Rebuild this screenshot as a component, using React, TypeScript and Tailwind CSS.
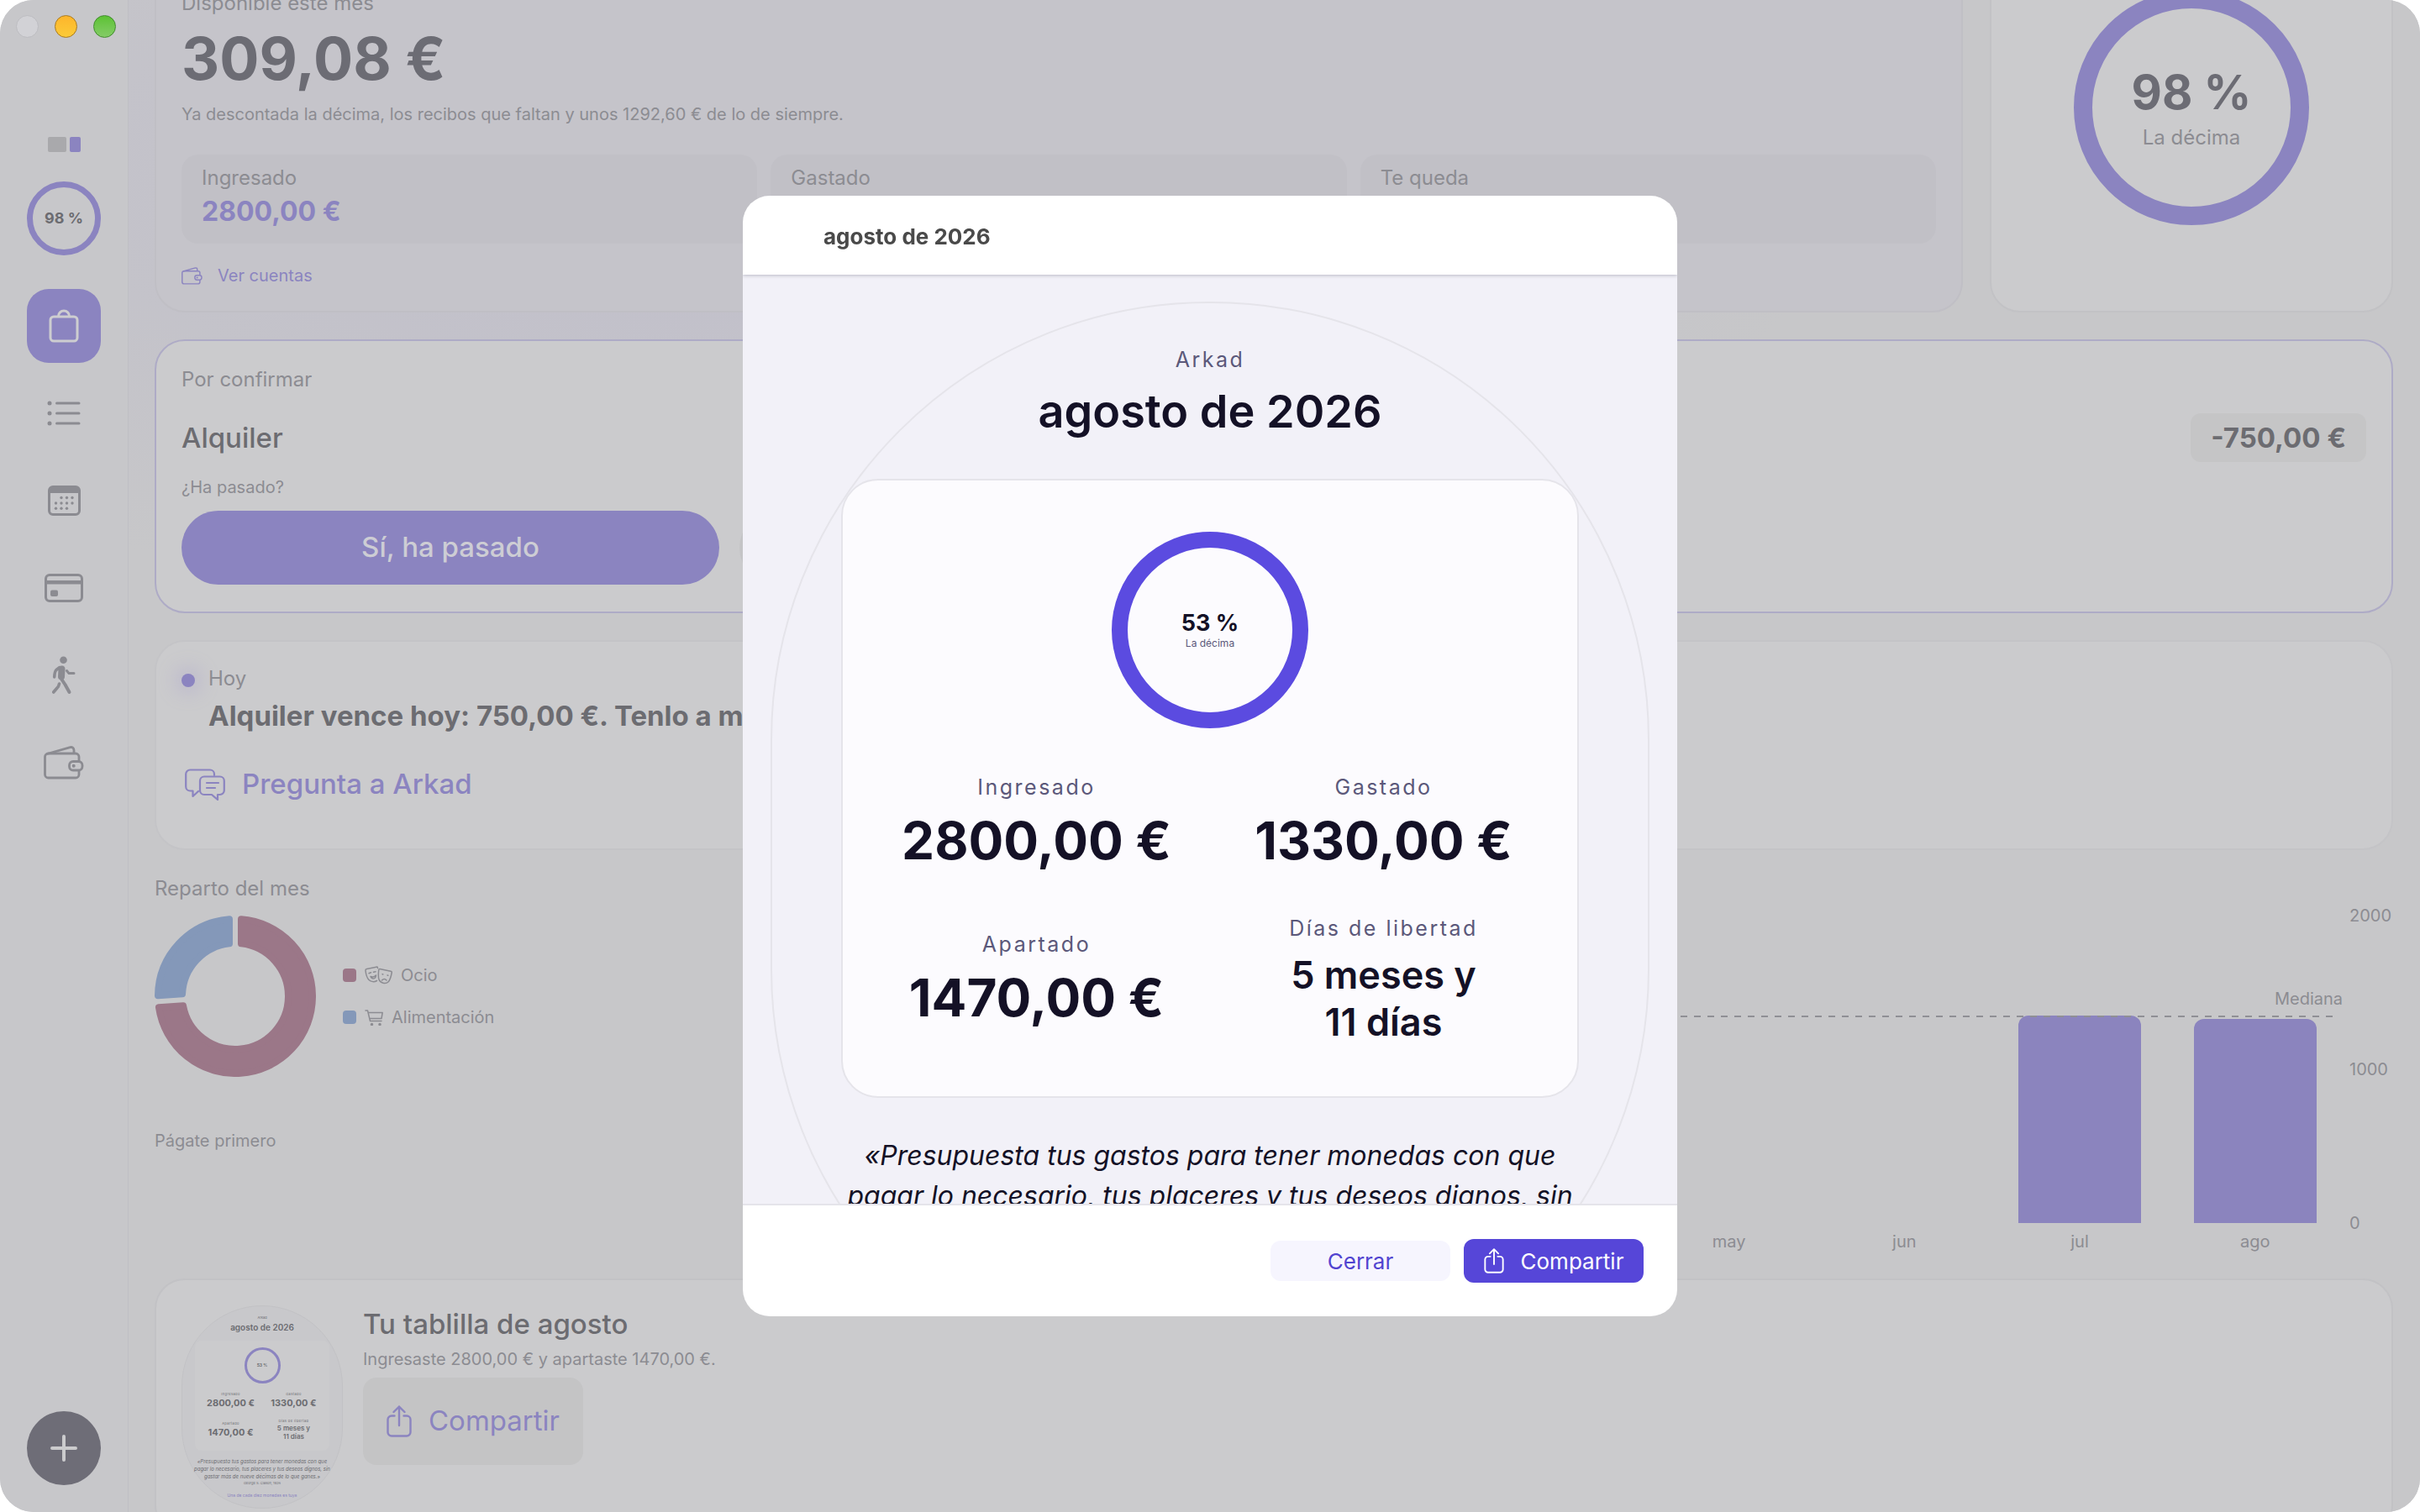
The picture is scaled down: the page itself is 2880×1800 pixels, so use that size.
import type { ReactNode } from "react";

const CalendarIcon = () => (
  <svg width="39" height="36" viewBox="0 0 39 36" fill="none">
    <rect x="1.5" y="1.5" width="36" height="33" rx="4.5" stroke="currentColor" strokeWidth="3" />
    <path d="M1.5 9V6a4.5 4.5 0 0 1 4.5-4.5h27a4.5 4.5 0 0 1 4.5 4.5v3z" fill="currentColor" />
    <g fill="currentColor">
      {[[16, 14.5], [22.5, 14.5], [29, 14.5], [9.5, 21], [16, 21], [22.5, 21], [29, 21], [9.5, 27.2], [16, 27.2], [22.5, 27.2]].map(([x, y]) => (
        <circle key={`${x}-${y}`} cx={x} cy={y} r="1.7" />
      ))}
    </g>
  </svg>
);

const BagIcon = () => (
  <svg width="36" height="40" viewBox="0 0 36 40" fill="none" stroke="currentColor" strokeWidth="3">
    <rect x="2" y="9" width="32" height="29" rx="4" />
    <path d="M11.5 8.5a6.5 6.5 0 0 1 13 0" />
  </svg>
);

const ListIcon = () => (
  <svg width="40" height="30" viewBox="0 0 40 30" stroke="currentColor" strokeWidth="3" strokeLinecap="round">
    <path d="M11.5 3H38M11.5 15H38M11.5 27H38" />
    <g fill="currentColor" stroke="none">
      <circle cx="3" cy="3" r="2.5" />
      <circle cx="3" cy="15" r="2.5" />
      <circle cx="3" cy="27" r="2.5" />
    </g>
  </svg>
);

const CardIcon = () => (
  <svg width="46" height="34" viewBox="0 0 46 34" fill="none">
    <rect x="1.5" y="1.5" width="43" height="31" rx="4.5" stroke="currentColor" strokeWidth="3" />
    <path d="M1.5 10.2h43" stroke="currentColor" strokeWidth="4.5" />
    <rect x="7" y="19.5" width="9" height="7.5" rx="2" fill="currentColor" />
  </svg>
);

const WalkIcon = () => (
  <svg width="29" height="46" viewBox="0 0 29 46" fill="none" stroke="currentColor" strokeLinecap="round" strokeLinejoin="round">
    <circle cx="13.5" cy="4.7" r="4.3" fill="currentColor" stroke="none" />
    <path d="M11.5 15.5 11 24.5" strokeWidth="8" />
    <path d="M9 13.5 5 16.5Q3 18.5 2.7 25" strokeWidth="3.5" />
    <path d="m17.5 17.5 2.5 3.1h6" strokeWidth="3" />
    <path d="m10.5 26.5 5 7.5 5 9" strokeWidth="4" />
    <path d="M8.5 33Q8 36 6 38l-4.3 5" strokeWidth="3.6" />
  </svg>
);

const WalletIcon = ({ width = 48, height = 40 }: { width?: number; height?: number }) => (
  <svg width={width} height={height} viewBox="0 0 48 40" fill="none" stroke="currentColor" strokeWidth="2.8">
    <path d="M42 18.5V13a4 4 0 0 0-4-4H5.5a4 4 0 0 0-4 4v21a4 4 0 0 0 4 4H38a4 4 0 0 0 4-4v-5" />
    <path d="M4 9.5 31.5 1.6Q35.5 1 36 5v4" />
    <rect x="30.5" y="18.5" width="15.5" height="10.5" rx="4.5" />
    <circle cx="35.7" cy="23.7" r="2" fill="currentColor" stroke="none" />
  </svg>
);

const ShareIcon = ({ width = 30, height = 38 }: { width?: number; height?: number }) => (
  <svg width={width} height={height} viewBox="0 0 30 38" fill="none" stroke="currentColor" strokeWidth="2.4" strokeLinecap="round" strokeLinejoin="round">
    <path d="M9.5 12.5H6A4.5 4.5 0 0 0 1.5 17v15A4.5 4.5 0 0 0 6 36.5h18a4.5 4.5 0 0 0 4.5-4.5V17a4.5 4.5 0 0 0-4.5-4.5h-3.5" />
    <path d="M15 24V1.5M8.5 8 15 1.5 21.5 8" />
  </svg>
);

const ChatIcon = () => (
  <svg width="48" height="38" viewBox="0 0 48 38" fill="none" stroke="currentColor" strokeWidth="2.2" strokeLinecap="round" strokeLinejoin="round">
    <path d="M35 8V6.5a5 5 0 0 0-5-5H6.2a5 5 0 0 0-5 5v15a5 5 0 0 0 5 5h3.3V33l6.5-6" />
    <path d="M23 9.5h18.8a5 5 0 0 1 5 5V26a5 5 0 0 1-5 5H39v6l-7-6h-9a5 5 0 0 1-5-5V14.5a5 5 0 0 1 5-5z" />
    <path d="M26 17h14M26 23h10" />
  </svg>
);

const MasksIcon = () => (
  <svg width="33" height="22" viewBox="0 0 33 22" fill="none" stroke="currentColor" strokeWidth="1.5" strokeLinecap="round" strokeLinejoin="round">
    <path d="M15.5 2.5 15 1 2.5 3.6Q.8 4 1 5.5C1.5 10 2.5 14 5 16.5c2.5 2.5 6.5 2.8 9.5 1" />
    <path d="M18 3.5 31 6.2q1.5.3 1.2 1.8C31.5 12 30.5 16.5 28 19c-3 3-9.5 1.5-11-3-1.3-3.8-.5-8-.3-11.2Q16.9 3.3 18 3.5z" />
    <path d="m5 8.8 2.5-1M10.5 7.3l2.5-.6M7 12.5q4 1.5 6.5-1.5-.5 4-3 4T7 12.5zM20.5 17q3-3 5.500 0M21 9.7l.8.2M27 11l.8.2" />
  </svg>
);

const CartIcon = () => (
  <svg width="22" height="19" viewBox="0 0 22 19" fill="none" stroke="currentColor" strokeWidth="1.5" strokeLinecap="round" strokeLinejoin="round">
    <path d="M1 1h2.500L6.500 13.500H20M4.200 3.500h17L20 10.500H6" />
    <circle cx="8.5" cy="17.5" r="1" fill="currentColor" />
    <circle cx="18" cy="17.5" r="1" fill="currentColor" />
  </svg>
);

const navItems = [
  { label: "Resumen", icon: <BagIcon />, active: true },
  { label: "Movimientos", icon: <ListIcon /> },
  { label: "Calendario", icon: <CalendarIcon /> },
  { label: "Tarjetas", icon: <CardIcon /> },
  { label: "Camino", icon: <WalkIcon /> },
  { label: "Cuentas", icon: <WalletIcon /> },
];

const months = [
  { name: "mar", value: 0 },
  { name: "abr", value: 0 },
  { name: "may", value: 0 },
  { name: "jun", value: 0 },
  { name: "jul", value: 1349 },
  { name: "ago", value: 1328 },
];

const Sidebar = () => (
  <aside className="flex w-[153px] shrink-0 flex-col items-center border-r border-[#bfbfc4] bg-[#c7c7ca] pt-[18px] pb-8">
    <div className="ml-1 flex gap-[19px]">
      <span className="size-[27px] rounded-full border border-[#bcbcc0] bg-[#d2d2d6]" />
      <span className="size-[27px] rounded-full border border-[#a8781c] bg-linear-to-b from-[#fdb52c] to-[#fbcb38]" />
      <span className="size-[27px] rounded-full border border-[#3f8a2c] bg-linear-to-b from-[#5cc232] to-[#84cc66]" />
    </div>
    <div className="mt-[118px] flex gap-1">
      <span className="h-[18px] w-[22px] rounded-xs bg-[#a9a9ac]" />
      <span className="h-[18px] w-[13px] rounded-xs bg-[#8b84c0]" />
    </div>
    <div className="mt-[35px] flex size-22 items-center justify-center rounded-full border-[7px] border-[#8b84c0] text-lg font-bold text-[#6c6c71]">
      98 %
    </div>
    <nav className="mt-10 flex flex-col gap-4">
      {navItems.map((item) => (
        <button
          key={item.label}
          aria-label={item.label}
          className={
            item.active
              ? "flex size-22 items-center justify-center rounded-[26px] bg-[#8b84c0] text-[#cdcdd0]"
              : "flex size-22 items-center justify-center rounded-[26px] text-[#8b8b91]"
          }
        >
          {item.icon}
        </button>
      ))}
    </nav>
    <button aria-label="Añadir" className="mt-auto flex size-22 items-center justify-center rounded-full bg-[#6e6d77] text-[#cbcbcd]">
      <svg width="32" height="32" viewBox="0 0 32 32" stroke="currentColor" strokeWidth="4" strokeLinecap="round">
        <path d="M16 2v28M2 16h28" />
      </svg>
    </button>
  </aside>
);

const Tile = ({ label, value }: { label: string; value?: string }) => (
  <div className="flex h-[106px] flex-1 flex-col gap-[6px] rounded-[20px] bg-[#c1c0c6] px-6 pt-[14px]">
    <div className="text-2xl leading-7 text-[#8c8c92]">{label}</div>
    {value && <div className="text-[32px] leading-10 font-bold text-[#8b84c0]">{value}</div>}
  </div>
);

const Hero = () => (
  <div className="flex min-h-[488px] gap-8">
    <section className="flex flex-1 flex-col justify-end rounded-[36px] border-2 border-[#c0bfc5] bg-[#c5c4ca] px-[30px] pt-[30px] pb-7">
      <div className="text-2xl leading-7 text-[#8c8c92]">Disponible este mes</div>
      <div className="mt-3 text-[70px] leading-20 font-bold text-[#6c6c74]">309,08 €</div>
      <p className="mt-3 text-xl leading-7 text-[#8c8c92]">
        Ya descontada la décima, los recibos que faltan y unos 1292,60 € de lo de siempre.
      </p>
      <div className="mt-[34px] flex gap-4">
        <Tile label="Ingresado" value="2800,00 €" />
        <Tile label="Gastado" />
        <Tile label="Te queda" />
      </div>
      <a href="#cuentas" className="mt-6 flex items-center gap-[18px] text-xl leading-7 text-[#8b84c0]">
        <WalletIcon width={25} height={21} />
        Ver cuentas
      </a>
    </section>
    <section className="flex w-[480px] shrink-0 items-center justify-center rounded-[36px] border-2 border-[#c2c2c5] bg-[#cbcbcd]">
      <div className="flex size-70 flex-col items-center justify-center rounded-full border-[22px] border-[#8b84c0] pt-1">
        <div className="text-[56px] leading-16 font-bold text-[#6c6c74]">98 %</div>
        <div className="mt-1 text-2xl leading-9 text-[#8c8c92]">La décima</div>
      </div>
    </section>
  </div>
);

const Confirm = () => (
  <section className="rounded-[36px] border-2 border-[#aeabc6] bg-[#cbcbcd] px-[30px] py-8">
    <h2 className="text-2xl leading-7 text-[#8c8c92]">Por confirmar</h2>
    <div className="mt-[26px] flex items-center justify-between">
      <div className="text-[33px] leading-10 font-medium text-[#6c6c71]">Alquiler</div>
      <div className="rounded-xl bg-[#c5c5c6] px-6 py-[9px] text-[33px] leading-10 font-bold text-[#6c6c71]">-750,00 €</div>
    </div>
    <p className="mt-4 text-xl leading-7 text-[#8c8c92]">¿Ha pasado?</p>
    <div className="mt-[14px] flex gap-6">
      <button className="h-22 w-160 rounded-full bg-[#8b84c0] text-[33px] font-medium text-[#cdcdd4]">Sí, ha pasado</button>
      <button aria-label="Todavía no" className="h-22 w-160 rounded-full bg-[#c4c4c6]" />
    </div>
  </section>
);

const Today = () => (
  <section className="rounded-[36px] border-2 border-[#c4c4c7] bg-[#cbcbcd] px-[30px] pt-[30px] pb-8">
    <div className="flex items-start gap-4">
      <span className="mt-2 size-4 rounded-full bg-[#8b84c0] shadow-[0_0_24px_6px_#b9b5cc]" />
      <div>
        <div className="text-2xl leading-7 text-[#8c8c92]">Hoy</div>
        <h2 className="mt-[10px] text-[33px] leading-10 font-bold text-[#6c6c71]">Alquiler vence hoy: 750,00 €. Tenlo a mano.</h2>
      </div>
    </div>
    <button className="mt-[18px] flex h-22 items-center gap-5 pl-1 text-[33px] font-medium text-[#8b84c0]">
      <ChatIcon />
      Pregunta a Arkad
    </button>
  </section>
);

const LegendItem = ({ color, icon, children }: { color: string; icon: ReactNode; children: ReactNode }) => (
  <li className="flex items-center gap-[10px] text-xl leading-7 text-[#8c8c92]">
    <span className={`size-4 rounded ${color}`} />
    {icon}
    <span>{children}</span>
  </li>
);

const Breakdown = () => (
  <section className="flex-1">
    <h2 className="text-2xl leading-7 text-[#8c8c92]">Reparto del mes</h2>
    <div className="mt-[18px] flex items-center gap-8">
      <svg width="192" height="192" viewBox="0 0 192 192" strokeWidth="8" strokeLinejoin="round">
        <path
          d="M103 4.27A92 92 0 1 1 4.96 109.22L34.01 107.24A63 63 0 1 0 103 33.39Z"
          fill="#9b7788"
          stroke="#9b7788"
        />
        <path d="M4 95.26A92 92 0 0 1 89 4.27V33.39A63 63 0 0 0 33.05 93.28Z" fill="#8498b9" stroke="#8498b9" />
      </svg>
      <ul className="flex flex-col gap-[22px]">
        <LegendItem color="bg-[#9b7788]" icon={<MasksIcon />}>Ocio</LegendItem>
        <LegendItem color="bg-[#8498b9]" icon={<CartIcon />}>Alimentación</LegendItem>
      </ul>
    </div>
    <h3 className="mt-[62px] text-xl leading-7 text-[#8c8c92]">Págate primero</h3>
  </section>
);

const Chart = () => (
  <section className="flex-1 pt-[46px] pl-2 text-xl leading-7 text-[#8c8c92]">
    <div className="flex">
      <div className="relative flex h-[366px] flex-1 items-end">
        {months.map((m) => (
          <div key={m.name} className="flex h-full flex-1 items-end justify-center">
            <div className="w-[70%] rounded-t-xl bg-[#8b84be]" style={{ height: `${m.value / 20}%` }} />
          </div>
        ))}
        <div className="absolute right-2 bottom-[67%] left-0 h-[2px] bg-[repeating-linear-gradient(90deg,#8f8f95_0_8px,transparent_8px_16px)]" />
        <span className="absolute right-0 bottom-[69%]">Mediana</span>
      </div>
      <div className="-my-[14px] flex w-[60px] flex-col justify-between pl-2">
        <span>2000</span>
        <span>1000</span>
        <span>0</span>
      </div>
    </div>
    <div className="mt-[10px] mr-[60px] flex leading-6">
      {months.map((m) => (
        <span key={m.name} className="flex-1 text-center">{m.name}</span>
      ))}
    </div>
  </section>
);

const MiniStat = ({ label, value }: { label: string; value: string }) => (
  <div className="text-center">
    <div className="text-[4px] leading-[6px] tracking-widest">{label}</div>
    <div className="text-[11px] leading-[14px] font-bold whitespace-nowrap">{value}</div>
  </div>
);

// Reduced copy of the monthly tablet
const MiniTablet = () => (
  <div className="flex h-[242px] w-48 shrink-0 flex-col items-center rounded-full border border-[#c2c2c5] bg-[#c8c8cb] pt-[11px] text-[#6c6c71]">
    <div className="text-[4px] leading-[6px]">Arkad</div>
    <div className="text-[10px] leading-4 font-semibold">agosto de 2026</div>
    <div className="mt-2 flex h-[131px] w-40 flex-col items-center rounded-lg bg-[#cbcbcd] pt-2">
      <div className="flex size-[43px] shrink-0 items-center justify-center rounded-full border-[3px] border-[#8b84c0] text-[5px] font-bold">
        53 %
      </div>
      <div className="mt-[10px] grid grid-cols-2 items-center gap-x-[18px] gap-y-3">
        <MiniStat label="Ingresado" value="2800,00 €" />
        <MiniStat label="Gastado" value="1330,00 €" />
        <MiniStat label="Apartado" value="1470,00 €" />
        <div className="text-center">
          <div className="text-[4px] leading-[6px] tracking-widest">Días de libertad</div>
          <div className="text-[8px] leading-[10px] font-semibold">
            5 meses y<br />11 días
          </div>
        </div>
      </div>
    </div>
    <p className="mt-2 w-[168px] text-center text-[6px] leading-[9px] italic">
      «Presupuesta tus gastos para tener monedas con que pagar lo necesario, tus placeres y tus deseos dignos, sin gastar más de nueve décimas de lo que ganes.»
    </p>
    <div className="text-[4px] leading-[8px]">George S. Clason, 1926</div>
    <div className="mt-[6px] text-[5px] leading-[9px] text-[#8b84c0]">Una de cada diez monedas es tuya</div>
  </div>
);

const TabletCard = () => (
  <section className="flex gap-6 rounded-[36px] border-2 border-[#c2c2c5] bg-[#cbcbcd] p-[30px]">
    <MiniTablet />
    <div className="flex flex-col items-start gap-2 pt-0.5">
      <h2 className="text-[33px] leading-10 font-medium text-[#6c6c71]">Tu tablilla de agosto</h2>
      <p className="text-xl leading-7 text-[#8c8c92]">Ingresaste 2800,00 € y apartaste 1470,00 €.</p>
      <button className="flex h-[104px] items-center gap-5 rounded-2xl bg-[#c4c4c5] px-7 text-[33px] text-[#8b84c0]">
        <ShareIcon />
        Compartir
      </button>
    </div>
  </section>
);

const Stat = ({ label, children }: { label: string; children: ReactNode }) => (
  <div className="flex flex-col items-center text-center">
    <div className="text-[25px] leading-9 tracking-widest text-[#5b587a]">{label}</div>
    {children}
  </div>
);

const Amount = ({ children }: { children: ReactNode }) => (
  <div className="text-[62px] leading-[92px] font-bold whitespace-nowrap">{children}</div>
);

const Modal = () => (
  <div className="fixed inset-0 flex items-center justify-center">
    <div role="dialog" aria-labelledby="dialog-title" className="flex max-h-[1334px] w-[1112px] max-w-full flex-col overflow-hidden rounded-[32px] bg-white">
      <header className="z-10 shrink-0 px-24 pt-[31px] pb-[27px] shadow-[0_1px_4px_#b8b8c4]">
        <h1 id="dialog-title" className="text-[26px] leading-9 font-bold text-[#4a4a4a]">agosto de 2026</h1>
      </header>
      <div className="min-h-0 flex-1 overflow-hidden bg-[#f2f1f8] px-[33px] py-8">
        <div className="flex min-h-[1317px] flex-col items-center rounded-[522px] border-2 border-[#e5e4ea] px-[82px] pt-[49px] pb-24 text-[#141126]">
          <div className="text-[25px] leading-9 tracking-widest text-[#5b587a]">Arkad</div>
          <h2 className="mt-2 text-[54px] leading-18 font-semibold">agosto de 2026</h2>
          <div className="mt-11 flex w-full flex-col items-center rounded-[44px] border-2 border-[#e5e4ea] bg-[#fcfbfe] px-10 pt-[61px] pb-[52px]">
            <div className="flex size-[234px] flex-col items-center justify-center rounded-full border-[19px] border-[#5b4be0]">
              <div className="text-[27px] leading-8 font-bold">53 %</div>
              <div className="text-xs leading-4 text-[#5b587a]">La décima</div>
            </div>
            <div className="mt-[52px] grid w-full grid-cols-2 items-center gap-x-8 gap-y-10">
              <Stat label="Ingresado"><Amount>2800,00 €</Amount></Stat>
              <Stat label="Gastado"><Amount>1330,00 €</Amount></Stat>
              <Stat label="Apartado"><Amount>1470,00 €</Amount></Stat>
              <Stat label="Días de libertad">
                <div className="mt-[10px] pb-2 text-[45px] leading-14 font-semibold">
                  5 meses y<br />11 días
                </div>
              </Stat>
            </div>
          </div>
          <p className="mt-[45px] w-full text-center text-[32px] leading-12 italic">
            «Presupuesta tus gastos para tener monedas con que pagar lo necesario, tus placeres y tus deseos dignos, sin gastar más de nueve décimas de lo que ganes.»
          </p>
        </div>
      </div>
      <footer className="flex h-[134px] shrink-0 items-center justify-end gap-4 border-t-2 border-[#e5e4ea] px-10">
        <button className="h-12 w-[214px] rounded-xl bg-[#f6f5fe] text-[26px] text-[#5144d0]">Cerrar</button>
        <button className="flex h-[52px] w-[214px] items-center justify-center gap-5 rounded-xl bg-[#5646d8] text-[26px] text-white">
          <ShareIcon width={24} height={30} />
          Compartir
        </button>
      </footer>
    </div>
  </div>
);

export default function App() {
  return (
    <div className="h-screen bg-white font-[Inter,'Liberation_Sans',sans-serif]">
      <div className="flex h-full overflow-hidden rounded-[40px] bg-[#c7c7c9]">
        <Sidebar />
        <main className="h-full min-w-0 flex-1 overflow-hidden bg-[radial-gradient(50%_28%_at_25%_12%,#c0becb_0%,#c7c7c9_100%)] pr-8 pl-[31px]">
          {/* Scrolled past the top of the summary */}
          <div className="-mt-[116px] flex flex-col gap-8">
            <Hero />
            <Confirm />
            <Today />
            <div className="flex gap-8">
              <Breakdown />
              <Chart />
            </div>
            <TabletCard />
          </div>
        </main>
      </div>
      <Modal />
    </div>
  );
}
